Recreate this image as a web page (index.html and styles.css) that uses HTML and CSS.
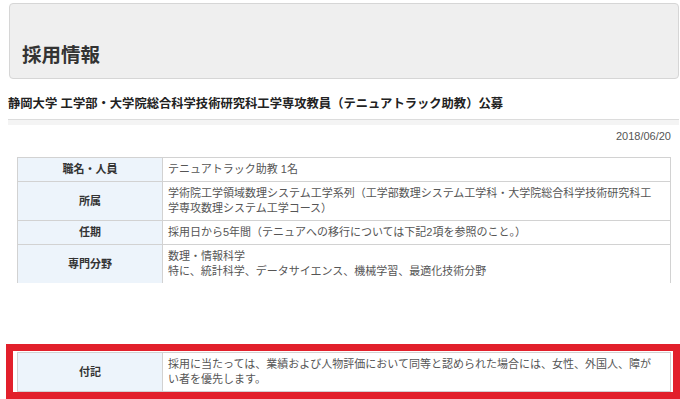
FILE: index.html
```html
<!DOCTYPE html>
<html lang="ja">
<head>
<meta charset="utf-8">
<link rel="stylesheet" href="styles.css">
</head>
<body>
<div class="page">
  <div class="header"><h1 class="title">採用情報</h1></div>
  <h2 class="subtitle">静岡大学 工学部・大学院総合科学技術研究科工学専攻教員（テニュアトラック助教）公募</h2>
  <div class="rule"></div>
  <div class="date">2018/06/20</div>
  <div class="clip">
    <table class="info">
      <tr><th>職名・人員</th><td>テニュアトラック助教 1名</td></tr>
      <tr><th>所属</th><td>学術院工学領域数理システム工学系列（工学部数理システム工学科・大学院総合科学技術研究科工学専攻数理システム工学コース）</td></tr>
      <tr><th>任期</th><td>採用日から5年間（テニュアへの移行については下記2項を参照のこと。）</td></tr>
      <tr><th>専門分野</th><td>数理・情報科学<br>特に、統計科学、データサイエンス、機械学習、最適化技術分野</td></tr>
    </table>
  </div>
</div>
<div class="mark">
  <table class="info">
    <tr><th>付記</th><td>採用に当たっては、業績および人物評価において同等と認められた場合には、女性、外国人、障がい者を優先します。</td></tr>
  </table>
</div>
</body>
</html>
```
FILE: styles.css
```css
html, body {
  margin: 0;
  padding: 0;
  background: #fff;
  overflow: hidden;
}
body {
  font-family: "Liberation Sans", "Noto Sans CJK JP", sans-serif;
  color: #444;
}
.page {
  padding: 3px 9px 0 8px;
}
.header {
  margin-left: 1px;
  margin-right: -8px;
  border: 1px solid #d6d6d6;
  border-radius: 4px;
  background: #efefef;
  display: flex;
  align-items: flex-end;
  padding: 0 0 13px 12px;
  box-sizing: border-box;
  height: 76px;
}
.title {
  margin: 0;
  font-size: 19.5px;
  line-height: 20px;
  font-weight: bold;
  color: #333;
}
.subtitle {
  margin: 17px 0 0 0;
  font-size: 12.3px;
  line-height: 16px;
  font-weight: bold;
  color: #222;
}
.rule {
  margin: 7px -8px 0 0;
  height: 5px;
  border-top: 1px solid #dcdcdc;
  background: #f4f4f4;
}
.date {
  margin-top: 5px;
  text-align: right;
  font-size: 11px;
  line-height: 12px;
  color: #555;
}
.clip {
  margin-top: 15px;
  margin-left: 9px;
  height: 126px;
  overflow: hidden;
}
.info {
  width: 654px;
  border-collapse: collapse;
  font-size: 11px;
  line-height: 15px;
}
.info th, .info td {
  border: 1px solid #d2d2d2;
  padding: 4px 14px 4px 5px;
  vertical-align: middle;
}
.info th {
  width: 134px;
  background: #edf4fb;
  color: #333;
  font-weight: bold;
  text-align: center;
  padding: 4px 5px;
}
.info td {
  color: #555;
  text-align: left;
}
.mark {
  margin: 61px 0 0 6px;
  width: 674px;
  box-sizing: border-box;
  border: 7px solid #e2202b;
  padding: 1px 2px 0 4px;
}
```
